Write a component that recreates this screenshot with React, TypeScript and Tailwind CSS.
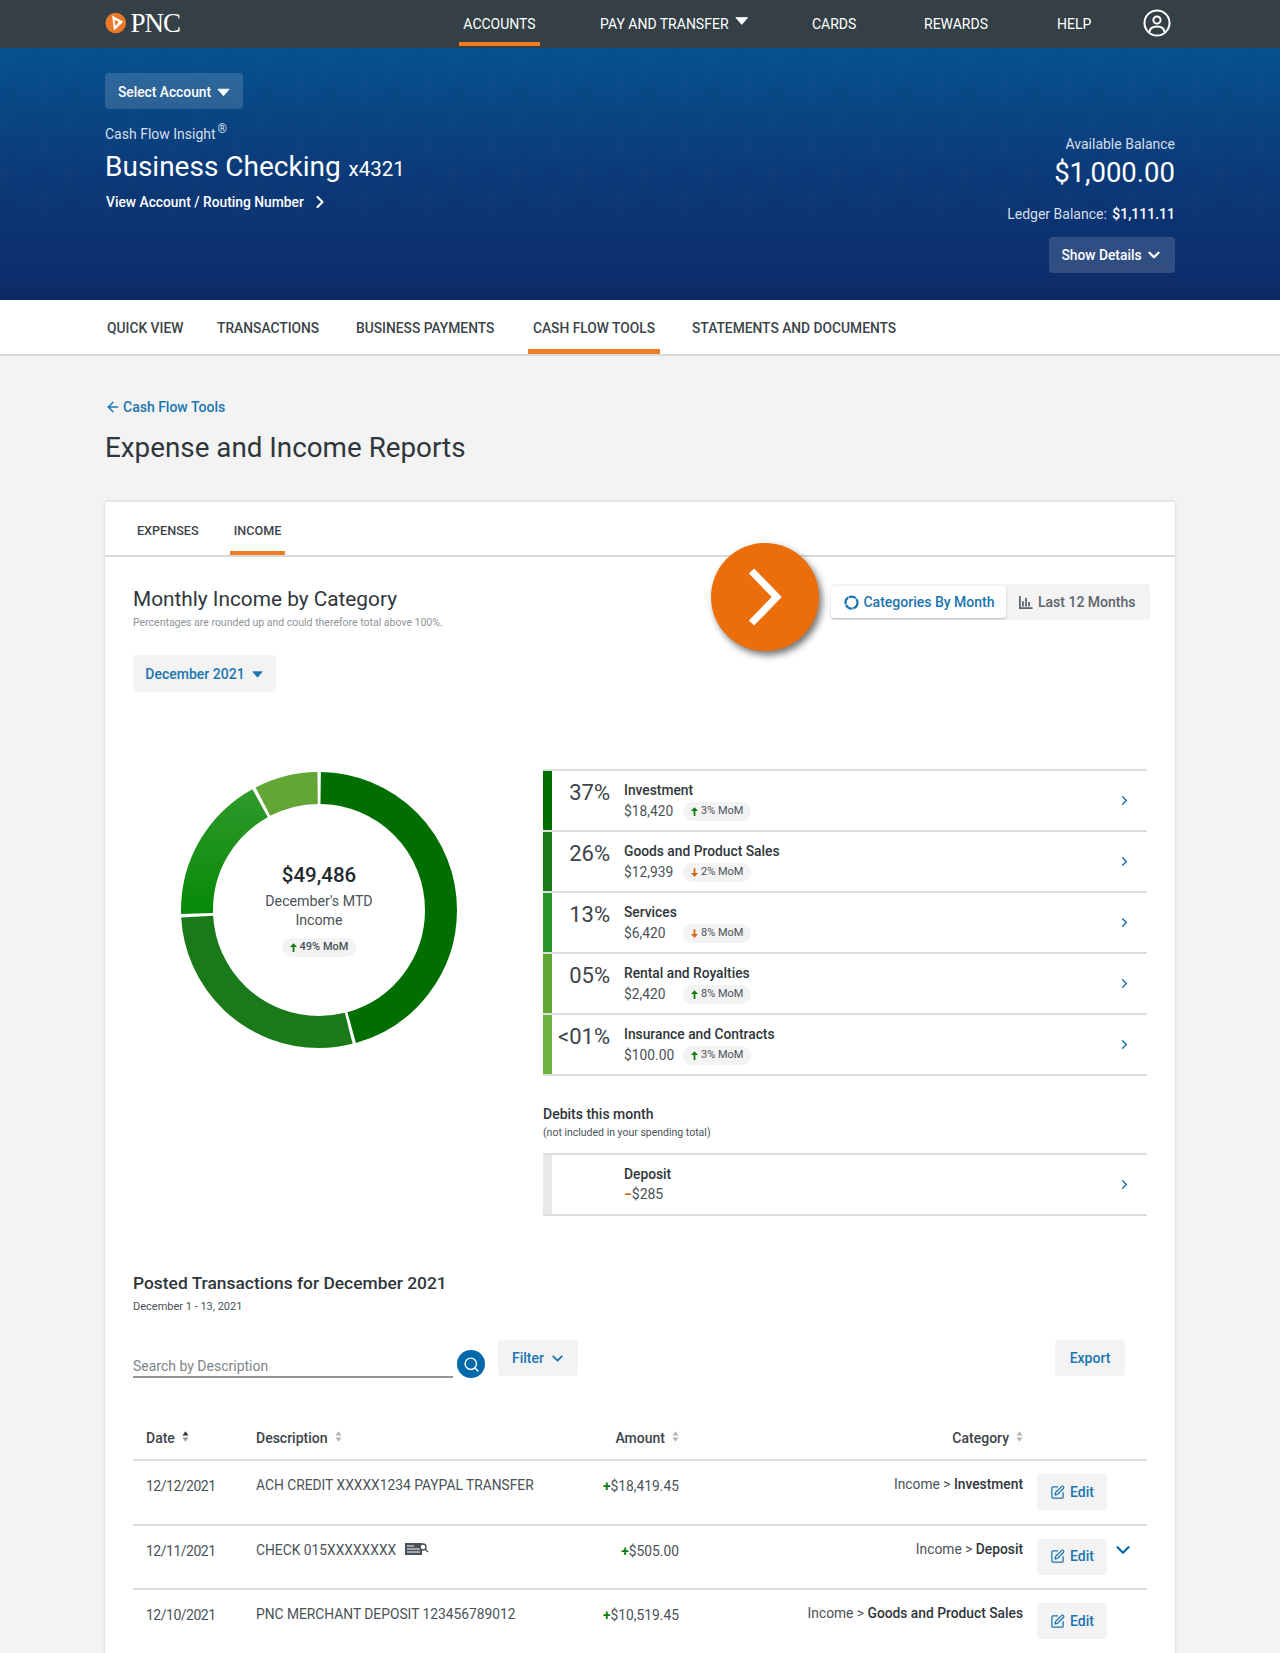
import { ChevronDown, ChevronRight, ArrowLeft, Search, SquarePen } from 'lucide-react';

const font = { fontFamily: 'Roboto, "Liberation Sans", sans-serif' };

function Caret({ className }: { className?: string }) {
  return (
    <svg viewBox="0 0 14 9" className={className}>
      <path d="M1 1 H13 L7 8 Z" fill="currentColor" stroke="currentColor" strokeLinejoin="round" />
    </svg>
  );
}

function MomPill({ text, up, className }: { text: string; up: boolean; className?: string }) {
  return (
    <span className={`inline-flex items-center gap-[3px] h-[19px] rounded-full bg-[#f3f3f3] px-2 text-[11px] text-[#4a5258] ${className ?? ''}`}>
      <svg viewBox="0 0 8 10" className={`w-[7px] h-[9px] ${up ? 'text-[#0a7d0a]' : 'text-[#d9660f] rotate-180'}`}>
        <path d="M4 0 L8 4.5 H5 V10 H3 V4.5 H0 Z" fill="currentColor" />
      </svg>
      {text}
    </span>
  );
}

function Sort({ active }: { active?: boolean }) {
  return (
    <svg viewBox="0 0 8 12" className="w-[7px] h-[11px] ml-[7px] -mt-[3px]">
      <path d="M4 0 L7.5 4.8 H0.5 Z" fill={active ? '#333' : '#b5b5b5'} />
      <path d="M4 12 L7.5 7.2 H0.5 Z" fill={active ? '#999' : '#b5b5b5'} />
    </svg>
  );
}

function EditButton() {
  return (
    <button className="w-[70px] h-9 rounded-[4px] bg-[#f3f3f3] flex items-center justify-center gap-[5px] text-[14px] font-medium text-[#1b75b0]">
      <SquarePen className="w-[15px] h-[15px]" strokeWidth={2} />
      Edit
    </button>
  );
}

const categories = [
  { pct: '37%', name: 'Investment', amount: '$18,420', mom: '3% MoM', up: true, color: 'bg-[#006f00]' },
  { pct: '26%', name: 'Goods and Product Sales', amount: '$12,939', mom: '2% MoM', up: false, color: 'bg-[#1a7a1a]' },
  { pct: '13%', name: 'Services', amount: '$6,420', mom: '8% MoM', up: false, color: 'bg-[#2a942a]' },
  { pct: '05%', name: 'Rental and Royalties', amount: '$2,420', mom: '8% MoM', up: true, color: 'bg-[#62a636]' },
  { pct: '<01%', name: 'Insurance and Contracts', amount: '$100.00', mom: '3% MoM', up: true, color: 'bg-[#6cb33f]' },
];

const transactions = [
  { date: '12/12/2021', desc: 'ACH CREDIT XXXXX1234 PAYPAL TRANSFER', amount: '$18,419.45', cat: 'Investment' },
  { date: '12/11/2021', desc: 'CHECK 015XXXXXXXX', amount: '$505.00', cat: 'Deposit', check: true },
  { date: '12/10/2021', desc: 'PNC MERCHANT DEPOSIT 123456789012', amount: '$10,519.45', cat: 'Goods and Product Sales' },
];

function Donut() {
  // arcs are drawn with stroke-dasharray on r=122
  const seg = (from: number, to: number) => {
    const c = 2 * Math.PI * 122;
    const len = ((to - from) / 360) * c;
    return { dash: `${len} ${c - len}`, offset: -((from / 360) * c) };
  };
  const arcs = [
    { ...seg(0.8, 164.4), stroke: '#006f00' },
    { ...seg(165.8, 266.8), stroke: '#1a7a1a' },
    { ...seg(268.2, 331), stroke: 'url(#midGreen)' },
    { ...seg(332.5, 359.2), stroke: '#62a636' },
  ];
  return (
    <svg viewBox="0 0 276 276" className="w-[276px] h-[276px] -rotate-90">
      <defs>
        <linearGradient id="midGreen" x1="0" y1="0" x2="1" y2="0">
          <stop offset="0" stopColor="#088a08" />
          <stop offset="0.5" stopColor="#088a08" />
          <stop offset="1" stopColor="#2f9a2c" />
        </linearGradient>
      </defs>
      {arcs.map((a, i) => (
        <circle key={i} cx="138" cy="138" r="122" fill="none" stroke={a.stroke} strokeWidth="32" strokeDasharray={a.dash} strokeDashoffset={a.offset} />
      ))}
    </svg>
  );
}

export default function App() {
  return (
    <div className="relative w-[1280px] h-[1653px] overflow-hidden bg-[#f3f3f3] text-[#2f363b]" style={font}>
      {/* Top nav */}
      <nav className="h-12 bg-[#343f46] flex items-center pl-[105px] text-[14px] text-white whitespace-nowrap">
        <div className="w-[75px] flex items-center gap-[4px] -mt-[2px]">
          <svg viewBox="0 0 24 24" className="w-[22px] h-[22px]">
            <circle cx="12" cy="12" r="11.5" fill="#e9782a" />
            <path d="M8 3.5 L20.5 10.5 L10 20.5 Z" fill="#fff" />
            <path d="M10.5 8.5 L15.5 11 L11.5 15 Z" fill="#e9782a" />
          </svg>
          <span className="text-[27px] leading-none tracking-[-1px]" style={{ fontFamily: '"Liberation Serif", serif' }}>PNC</span>
        </div>
        <div className="relative ml-[279px] w-[81px] h-12 flex items-center justify-center">
          ACCOUNTS
          <span className="absolute left-0 right-0 bottom-[2px] h-1 bg-[#ef7d23]" />
        </div>
        <div className="ml-[60px] w-[148px] flex items-center gap-[6px]">
          PAY AND TRANSFER <Caret className="w-[14px] h-[10px] -mt-[6px]" />
        </div>
        <div className="ml-[64px] w-[44px]">CARDS</div>
        <div className="ml-[68px] w-[66px]">REWARDS</div>
        <div className="ml-[67px] w-[35px]">HELP</div>
        <svg viewBox="0 0 28 28" className="ml-[51px] w-[28px] h-[28px] -mt-[2px]" fill="none" stroke="#fff" strokeWidth="2">
          <circle cx="14" cy="14" r="12.5" />
          <circle cx="14" cy="11" r="3.6" />
          <path d="M6.5 23 C7 18.5 10 17.5 14 17.5 C18 17.5 21 18.5 21.5 23" />
        </svg>
      </nav>

      {/* Account hero */}
      <header className="relative h-[252px] bg-gradient-to-b from-[#05528f] via-[#0b3a78] to-[#0d2a68] px-[105px] pt-[25px] flex justify-between text-white">
        <svg className="absolute inset-x-0 top-0 w-full h-[170px] pointer-events-none" aria-hidden="true">
          <defs>
            <pattern id="tri" width="64" height="56" patternUnits="userSpaceOnUse">
              <path d="M0 0 L16 14 L0 28 Z M48 28 L32 42 L48 56 Z" fill="#fff" fillOpacity="0.008" />
              <path d="M32 0 L48 14 L32 28 Z M16 28 L0 42 L16 56 Z" fill="#000" fillOpacity="0.012" />
            </pattern>
          </defs>
          <rect width="100%" height="100%" fill="url(#tri)" />
        </svg>
        <div className="relative">
          <button className="h-9 w-[138px] rounded-[4px] bg-white/15 flex items-center justify-center gap-[6px] text-[13.8px] font-medium pt-[2px]">
            Select Account <Caret className="w-[13px] h-[9px]" />
          </button>
          <div className="mt-[15px] text-[14px] leading-[20px] text-[#d5dfea]">
            Cash Flow Insight<sup className="text-[12px] ml-[2px]">®</sup>
          </div>
          <div className="mt-[3px] text-[28px] leading-[40px] whitespace-nowrap">
            Business Checking <span className="text-[20.5px] ml-[1px]">x4321</span>
          </div>
          <div className="mt-[3px] ml-[1px] flex items-center gap-[6px] text-[13.8px] font-medium leading-[20px]">
            View Account / Routing Number <ChevronRight className="w-[20px] h-[20px]" strokeWidth={2.5} />
          </div>
        </div>
        <div className="relative flex flex-col items-end pt-[61px]">
          <div className="text-[14px] leading-[20px] text-[#d5dfea]">Available Balance</div>
          <div className="text-[27.5px] leading-[38px]">$1,000.00</div>
          <div className="mt-[12px] text-[14px] leading-[20px] text-[#d5dfea]">
            Ledger Balance: <span className="font-medium text-white ml-[2px]">$1,111.11</span>
          </div>
          <button className="mt-[13px] h-9 w-[126px] rounded-[4px] bg-white/15 flex items-center justify-center gap-[3px] text-[13.8px] font-medium">
            Show Details <ChevronDown className="w-[18px] h-[18px]" strokeWidth={3} />
          </button>
        </div>
      </header>

      {/* Section nav */}
      <div className="h-[56px] bg-white border-b-2 border-[#d9d9d9] flex pl-[107px] text-[13.8px] font-medium text-[#3c444a] whitespace-nowrap">
        <div className="w-[77px] flex items-center h-[54px] pt-[3px]">QUICK VIEW</div>
        <div className="ml-[33px] w-[101px] flex items-center h-[54px] pt-[3px]">TRANSACTIONS</div>
        <div className="ml-[38px] w-[140px] flex items-center h-[54px] pt-[3px]">BUSINESS PAYMENTS</div>
        <div className="relative ml-[32px] w-[132px] flex items-center justify-center h-[54px] pt-[3px]">
          CASH FLOW TOOLS
          <span className="absolute left-0 right-0 bottom-0 h-[5px] bg-[#ef7d23]" />
        </div>
        <div className="ml-[32px] flex items-center h-[54px] pt-[3px]">STATEMENTS AND DOCUMENTS</div>
      </div>

      {/* Page body */}
      <main className="px-[105px]">
        <div className="pt-[41px] flex items-center gap-[2px] text-[14px] font-medium text-[#1b75b0] leading-[20px]">
          <ArrowLeft className="w-[16px] h-[16px]" strokeWidth={2.2} />
          Cash Flow Tools
        </div>
        <h1 className="mt-[11px] text-[27.8px] leading-[40px] text-[#2f363b]">Expense and Income Reports</h1>

        <section className="mt-[34px] bg-white shadow-[0_0_3px_rgba(0,0,0,0.18)] h-[1200px]">
          {/* Tabs */}
          <div className="h-[55px] border-b-2 border-[#d9d9d9] flex pl-[32px] text-[12.6px] font-medium text-[#3c444a]">
            <div className="w-[61px] h-[53px] flex items-center pt-[5px]">EXPENSES</div>
            <div className="relative ml-[32px] w-[55px] h-[53px] flex items-center justify-center pt-[5px]">
              INCOME
              <span className="absolute left-0 right-0 bottom-0 h-1 bg-[#ef7d23]" />
            </div>
          </div>

          <div className="px-[28px]">
            {/* Heading row */}
            <div className="flex justify-between items-start">
              <div className="pt-[28px]">
                <h2 className="text-[20.8px] leading-[28px]">Monthly Income by Category</h2>
                <p className="text-[10.5px] leading-[14px] mt-[3px] text-[#8d9499]">Percentages are rounded up and could therefore total above 100%.</p>
              </div>
              <div className="mt-[27px] -mr-[3px] h-9 w-[319px] rounded-[4px] bg-[#f3f3f3] flex items-center pl-0 text-[14px] font-medium">
                <div className="h-[32px] w-[175px] rounded-[3px] bg-white shadow-[0_1px_2px_rgba(0,0,0,0.25)] flex items-center justify-center gap-[4px] pl-[2px] text-[#1b75b0]">
                  <svg viewBox="0 0 16 16" className="w-[15px] h-[15px]" fill="none" stroke="currentColor" strokeWidth="2.4">
                    <circle cx="8" cy="8" r="6.4" strokeDasharray="8 0.8" />
                  </svg>
                  Categories By Month
                </div>
                <div className="flex items-center gap-[5px] ml-[13px] text-[#5c656b] whitespace-nowrap">
                  <svg viewBox="0 0 16 16" className="w-[14px] h-[14px]" fill="none" stroke="currentColor" strokeWidth="2">
                    <path d="M1 1 V15 H15.5 M4.5 13 V7 M8 13 V3 M11.5 13 V8" />
                  </svg>
                  Last 12 Months
                </div>
              </div>
            </div>

            <button className="mt-[25px] h-[37px] w-[143px] rounded-[4px] bg-[#f3f3f3] flex items-center justify-center gap-[6px] pt-[1px] text-[14px] font-medium text-[#1b75b0]">
              December 2021 <Caret className="w-[13px] h-[7px]" />
            </button>

            {/* Chart and categories */}
            <div className="flex mt-[77px]">
              <div className="relative ml-[48px] mt-[3px] w-[276px] h-[276px] shrink-0">
                <Donut />
                <div className="absolute inset-0 flex flex-col items-center pt-[88px]">
                  <div className="text-[20.5px] leading-[30px] font-medium text-[#23292d]">$49,486</div>
                  <div className="text-[14.2px] leading-[19px] text-[#4a5258] mt-[2px] text-center">December's MTD<br />Income</div>
                  <MomPill text="49% MoM" up className="mt-[8px] font-medium text-[#2f363b]" />
                </div>
              </div>

              <div className="ml-[86px] w-[604px]">
                <div className="border-t-2 border-[#dedede]">
                  {categories.map((c) => (
                    <div key={c.name} className="flex items-stretch h-[61px] border-b-2 border-[#dedede]">
                      <div className={`w-[9px] ${c.color}`} />
                      <div className="w-[58px] text-right text-[22px] leading-[26px] pt-[9px] text-[#3c444a]">{c.pct}</div>
                      <div className="ml-[14px] pt-[10px]">
                        <div className="text-[13.8px] leading-[19px] font-medium">{c.name}</div>
                        <div className="flex items-center mt-[1px]">
                          <span className="text-[13.8px] leading-[20px] text-[#4a5258] w-[59px]">{c.amount}</span>
                          <MomPill text={c.mom} up={c.up} />
                        </div>
                      </div>
                      <div className="ml-auto mr-[15px] flex items-center">
                        <ChevronRight className="w-[15px] h-[15px] text-[#1b75b0]" strokeWidth={2.4} />
                      </div>
                    </div>
                  ))}
                </div>

                <div className="mt-[28px] text-[14px] leading-[20px] font-medium">Debits this month</div>
                <div className="text-[10.5px] leading-[14px] mt-[2px] text-[#4a5258]">(not included in your spending total)</div>

                <div className="mt-[13px] border-t-2 border-[#dedede]">
                  <div className="flex items-stretch h-[61px] border-b-2 border-[#dedede]">
                    <div className="w-[9px] bg-[#e9e9e9]" />
                    <div className="ml-[72px] pt-[10px]">
                      <div className="text-[13.8px] leading-[19px] font-medium">Deposit</div>
                      <div className="text-[14px] leading-[20px] text-[#4a5258]">
                        <span className="text-[#d9660f] font-bold">−</span>$285
                      </div>
                    </div>
                    <div className="ml-auto mr-[15px] flex items-center">
                      <ChevronRight className="w-[15px] h-[15px] text-[#1b75b0]" strokeWidth={2.4} />
                    </div>
                  </div>
                </div>
              </div>
            </div>

            {/* Posted transactions */}
            <h3 className="mt-[55px] text-[17.4px] leading-[24px] font-medium">Posted Transactions for December 2021</h3>
            <p className="text-[11px] leading-[14px] mt-[5px] text-[#4a5258]">December 1 - 13, 2021</p>

            <div className="mt-[26px] flex items-start w-[992px]">
              <div className="mt-[13px] w-[320px] h-[25px] border-b-2 border-[#8f979c] text-[14px] leading-[20px] pt-[3px] text-[#7d858a]">Search by Description</div>
              <button className="ml-[4px] mt-[10px] w-[28px] h-[28px] rounded-full bg-[#0069aa] flex items-center justify-center text-white">
                <Search className="w-[17px] h-[17px]" strokeWidth={2} />
              </button>
              <button className="ml-[13px] w-[80px] h-9 rounded-[4px] bg-[#f3f3f3] flex items-center justify-center gap-[5px] pl-[2px] text-[14px] font-medium text-[#1b75b0]">
                Filter <ChevronDown className="w-[17px] h-[17px]" strokeWidth={2.6} />
              </button>
              <button className="ml-auto w-[70px] h-9 rounded-[4px] bg-[#f3f3f3] text-[14px] font-medium text-[#1b75b0]">Export</button>
            </div>

            {/* Table */}
            <div className="mt-[43px] w-[1014px]">
              <div className="h-[40px] pb-[4px] flex items-center border-b-2 border-[#dedede] text-[14px] font-medium text-[#3c444a]">
                <div className="w-[123px] pl-[13px] flex items-center">Date <Sort active /></div>
                <div className="w-[300px] flex items-center">Description <Sort /></div>
                <div className="w-[123px] flex items-center justify-end">Amount <Sort /></div>
                <div className="w-[344px] flex items-center justify-end">Category <Sort /></div>
              </div>
              {transactions.map((t) => (
                <div key={t.date} className="h-[64.5px] flex items-start border-b-2 border-[#dedede] text-[13.8px] text-[#4a5258]">
                  <div className="w-[123px] pl-[13px] pt-[15px] leading-[20px] text-[14px] tracking-[-0.5px]">{t.date}</div>
                  <div className="w-[300px] pt-[14px] leading-[20px] flex items-center whitespace-nowrap">
                    {t.desc}
                    {t.check && (
                      <svg viewBox="0 0 24 14" className="ml-[9px] w-[24px] h-[14px] -mt-[2px] text-[#4a5258]">
                        <rect x="0" y="1" width="17" height="12" fill="currentColor" />
                        <path d="M2 4 H9 M2 7 H15 M2 10 H15" stroke="#fff" strokeWidth="1" />
                        <circle cx="18" cy="5" r="3" fill="#fff" stroke="currentColor" strokeWidth="1.4" />
                        <path d="M20 7 L23 10" stroke="currentColor" strokeWidth="1.4" />
                      </svg>
                    )}
                  </div>
                  <div className="w-[123px] pt-[15px] leading-[20px] text-right">
                    <span className="text-[#0a7d0a] font-bold">+</span>{t.amount}
                  </div>
                  <div className="w-[344px] pt-[13px] leading-[20px] text-right whitespace-nowrap">
                    Income &gt; <span className="font-medium text-[#2f363b]">{t.cat}</span>
                  </div>
                  <div className="ml-[14px] pt-[13px]"><EditButton /></div>
                  {t.check && <ChevronDown className="ml-[5px] mt-[13px] w-[22px] h-[22px] text-[#0069aa]" strokeWidth={2.4} />}
                </div>
              ))}
            </div>
          </div>
        </section>
      </main>

      {/* Floating next arrow */}
      <button className="absolute left-[711px] top-[543px] w-[108px] h-[108px] rounded-full bg-[#eb6e0b] shadow-[3px_4px_7px_rgba(0,0,0,0.55)] flex items-center justify-center">
        <svg viewBox="0 0 40 64" className="w-[36px] h-[60px]" fill="none" stroke="#fff" strokeWidth="8">
          <path d="M5 3 L33 32 L5 61" />
        </svg>
      </button>
    </div>
  );
}
